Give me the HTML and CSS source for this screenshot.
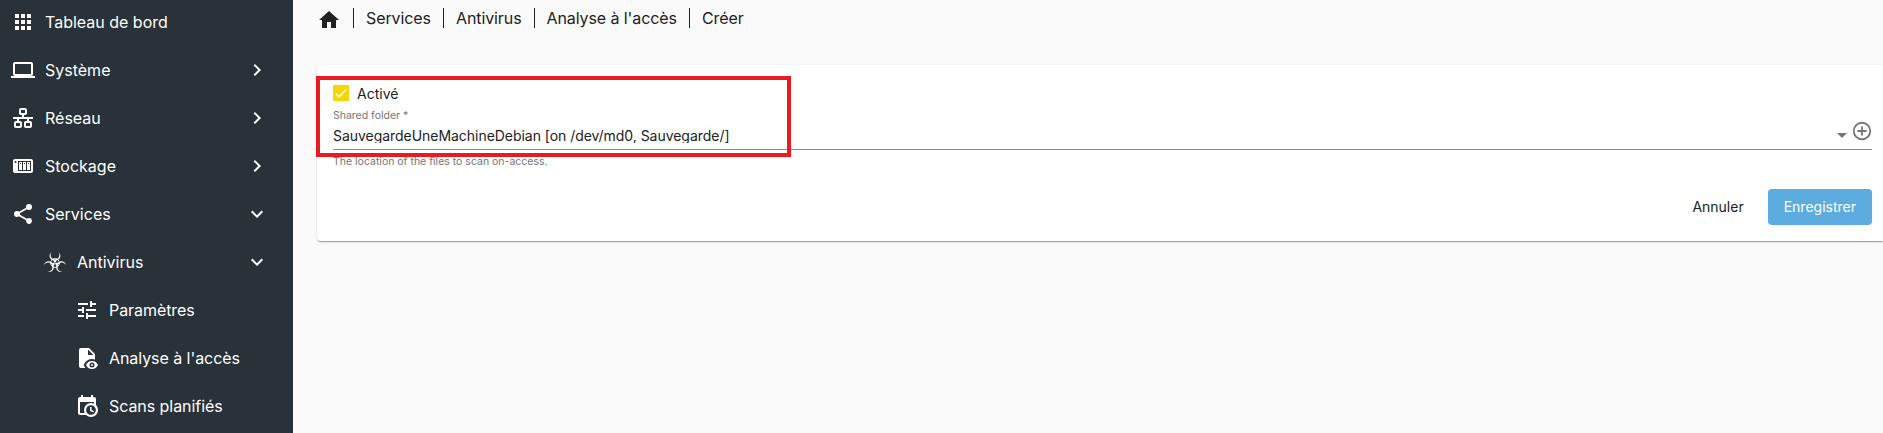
FILE: index.html
```html
<!DOCTYPE html>
<html lang="fr">
<head>
<meta charset="utf-8">
<title>Analyse à l'accès</title>
<link rel="stylesheet" href="styles.css">
</head>
<body>
<nav class="sidebar">
  <a class="item"><svg class="icon" viewBox="0 0 24 24"><path d="M16 20h4v-4h-4m0-2h4v-4h-4m-6-2h4V4h-4m6 4h4V4h-4m-6 10h4v-4h-4m-6 4h4v-4H4m0 10h4v-4H4m6 4h4v-4h-4M4 8h4V4H4v4z"/></svg><span class="label">Tableau de bord</span></a>
  <a class="item"><svg class="icon" viewBox="0 0 24 24"><path d="M4 6h16v10H4m16 2a2 2 0 0 0 2-2V6c0-1.11-.9-2-2-2H4c-1.11 0-2 .89-2 2v10a2 2 0 0 0 2 2H0v2h24v-2h-4z"/></svg><span class="label">Système</span><svg class="icon" viewBox="0 0 24 24"><path d="M8.59 16.58 13.17 12 8.59 7.41 10 6l6 6-6 6z"/></svg></a>
  <a class="item"><svg class="icon" viewBox="0 0 24 24"><path d="M10,2C8.89,2 8,2.89 8,4V7C8,8.11 8.89,9 10,9H11V11H2V13H6V15H5C3.89,15 3,15.89 3,17V20C3,21.11 3.89,22 5,22H9C10.11,22 11,21.11 11,20V17C11,15.89 10.11,15 9,15H8V13H16V15H15C13.89,15 13,15.89 13,17V20C13,21.11 13.89,22 15,22H19C20.11,22 21,21.11 21,20V17C21,15.89 20.11,15 19,15H18V13H22V11H13V9H14C15.11,9 16,8.11 16,7V4C16,2.89 15.11,2 14,2H10M10,4H14V7H10V4M5,17H9V20H5V17M15,17H19V20H15V17Z"/></svg><span class="label">Réseau</span><svg class="icon" viewBox="0 0 24 24"><path d="M8.59 16.58 13.17 12 8.59 7.41 10 6l6 6-6 6z"/></svg></a>
  <a class="item"><svg class="icon" viewBox="0 0 24 24"><path fill-rule="evenodd" d="M4,5C2.89,5 2,5.89 2,7V17C2,18.11 2.89,19 4,19H20C21.11,19 22,18.11 22,17V7C22,5.89 21.11,5 20,5H4M4.5,7A1,1 0 0,1 5.5,8A1,1 0 0,1 4.5,9A1,1 0 0,1 3.5,8A1,1 0 0,1 4.5,7M7,7H20V17H7V7M8,8V16H11V8H8M12,8V16H15V8H12M16,8V16H19V8H16M9,9H10V10H9V9M13,9H14V10H13V9M17,9H18V10H17V9Z"/></svg><span class="label">Stockage</span><svg class="icon" viewBox="0 0 24 24"><path d="M8.59 16.58 13.17 12 8.59 7.41 10 6l6 6-6 6z"/></svg></a>
  <a class="item"><svg class="icon" viewBox="0 0 24 24"><path d="M18,16.08C17.24,16.08 16.56,16.38 16.04,16.85L8.91,12.7C8.96,12.47 9,12.24 9,12C9,11.76 8.96,11.53 8.91,11.3L15.96,7.19C16.5,7.69 17.21,8 18,8A3,3 0 0,0 21,5A3,3 0 0,0 18,2A3,3 0 0,0 15,5C15,5.24 15.04,5.47 15.09,5.7L8.04,9.81C7.5,9.31 6.79,9 6,9A3,3 0 0,0 3,12A3,3 0 0,0 6,15C6.79,15 7.5,14.69 8.04,14.19L15.16,18.34C15.11,18.55 15.08,18.77 15.08,19C15.08,20.61 16.39,21.91 18,21.91C19.61,21.91 20.92,20.61 20.92,19A2.92,2.92 0 0,0 18,16.08Z"/></svg><span class="label">Services</span><svg class="icon" viewBox="0 0 24 24"><path d="M7.41 8.58 12 13.17l4.59-4.59L18 10l-6 6-6-6z"/></svg></a>
  <a class="item level-2"><svg class="icon" viewBox="0 0 24 24">
    <defs><path id="horn" d="M8.3 2.2C5.2 5.4 6.6 9.4 10.4 10.5L11.5 12.6H12.5L13.6 10.5C17.4 9.4 18.8 5.4 15.7 2.2C17.5 5.6 15.8 9 12.5 9.1V9.8H11.5V9.1C8.2 9 6.5 5.6 8.3 2.2Z"/></defs>
    <use href="#horn"/><use href="#horn" transform="rotate(120 12 13)"/><use href="#horn" transform="rotate(240 12 13)"/>
    <circle class="ring" cx="12" cy="13" r="4.4"/></svg><span class="label">Antivirus</span><svg class="icon" viewBox="0 0 24 24"><path d="M7.41 8.58 12 13.17l4.59-4.59L18 10l-6 6-6-6z"/></svg></a>
  <a class="item level-3"><svg class="icon" viewBox="0 0 24 24"><path d="M3 17v2h6v-2H3M3 5v2h10V5H3m10 16v-2h8v-2h-8v-2h-2v6h2M7 9v2H3v2h4v2h2V9H7m14 4v-2H11v2h10m-6-4h2V7h4V5h-4V3h-2v6z"/></svg><span class="label">Paramètres</span></a>
  <a class="item level-3"><svg class="icon" viewBox="0 0 24 24"><path fill-rule="evenodd" d="M17,18a1,1 0 1,1 0,2a1,1 0 1,1 0,-2M17,15C14.27,15 11.94,16.66 11,19C11.94,21.34 14.27,23 17,23C19.73,23 22.06,21.34 23,19C22.06,16.66 19.73,15 17,15M17,21.5A2.5,2.5 0 0,1 14.5,19A2.5,2.5 0 0,1 17,16.5A2.5,2.5 0 0,1 19.5,19A2.5,2.5 0 0,1 17,21.5M9.27,20.37L8.7,19L9.14,18.26C10.43,15.06 13.5,13 17,13C18.05,13 19.06,13.21 20,13.56V8L14,2H6C4.89,2 4,2.89 4,4V20A2,2 0 0,0 6,22H10.5C10,21.5 9.55,20.96 9.27,20.37M13,3.5L18.5,9H13V3.5Z"/></svg><span class="label">Analyse à l'accès</span></a>
  <a class="item level-3"><svg class="icon" viewBox="0 0 24 24"><path fill-rule="evenodd" d="M15,13H16.5V15.82L18.94,17.23L18.19,18.53L15,16.69V13M19,8H5V19H9.67C9.24,18.09 9,17.07 9,16A7,7 0 0,1 16,9C17.07,9 18.09,9.24 19,9.67V8M5,21C3.89,21 3,20.1 3,19V5C3,3.89 3.89,3 5,3H6V1H8V3H16V1H18V3H19A2,2 0 0,1 21,5V11.1C22.24,12.36 23,14.09 23,16A7,7 0 0,1 16,23C14.09,23 12.36,22.24 11.1,21H5M16,11.15A4.85,4.85 0 0,0 11.15,16C11.15,18.68 13.32,20.85 16,20.85A4.85,4.85 0 0,0 20.85,16C20.85,13.32 18.68,11.15 16,11.15Z"/></svg><span class="label">Scans planifiés</span></a>
</nav>
<main class="main">
  <div class="breadcrumb">
    <svg class="home" viewBox="0 0 24 24"><path d="M10,20V14H14V20H19V12H22L12,3L2,12H5V20H10Z"/></svg>
    <span class="crumb">Services</span><span class="crumb">Antivirus</span><span class="crumb">Analyse à l'accès</span><span class="crumb">Créer</span>
  </div>
  <section class="card">
    <div class="check-row">
      <span class="checkbox"><svg viewBox="0 0 24 24"><path d="M4.1,12.7 9,17.6 20.3,6.3"/></svg></span>
      <span>Activé</span>
    </div>
    <div class="field-label">Shared folder *</div>
    <div class="select">
      <span class="value">SauvegardeUneMachineDebian [on /dev/md0, Sauvegarde/]</span>
      <span class="caret"></span>
      <svg class="add" viewBox="0 0 24 24"><path d="M12,20C7.59,20 4,16.41 4,12C4,7.59 7.59,4 12,4C16.41,4 20,7.59 20,12C20,16.41 16.41,20 12,20M12,2A10,10 0 0,0 2,12A10,10 0 0,0 12,22A10,10 0 0,0 22,12A10,10 0 0,0 12,2M13,7H11V11H7V13H11V17H13V13H17V11H13V7Z"/></svg>
    </div>
    <div class="hint">The location of the files to scan on-access.</div>
    <div class="actions"><button class="btn">Annuler</button><button class="btn primary">Enregistrer</button></div>
    <div class="highlight"></div>
  </section>
</main>
</body>
</html>
```
FILE: styles.css
```css
* { box-sizing: border-box; }
body {
  margin: 0;
  height: 433px;
  display: flex;
  overflow: hidden;
  background: #fafafa;
  color: #212121;
  font: 14px/20px Inter, sans-serif;
}
.sidebar {
  width: 293px;
  height: 433px;
  flex: none;
  overflow: hidden;
  background: #283238;
  color: #fff;
  font-size: 16px;
}
.item {
  display: flex;
  align-items: center;
  height: 48px;
  padding: 0 24px 0 11px;
}
.item:first-child { height: 46px; padding-bottom: 2px; }
.level-2 { padding-left: 43px; }
.level-3 { padding-left: 75px; letter-spacing: -0.06px; }
.icon { width: 24px; height: 24px; flex: none; fill: currentColor; }
.label { flex: 1; margin-left: 10px; }
.ring { fill: none; stroke: currentColor; stroke-width: .9; }

.main { flex: 1; min-width: 0; }
.breadcrumb {
  display: flex;
  align-items: center;
  height: 37px;
  padding: 0 0 1px 24px;
  font-size: 16px;
  letter-spacing: -0.09px;
}
.home { width: 24px; height: 24px; margin: 3px 12px 0 0; fill: #212121; }
.crumb { padding: 0 12px; border-left: 1px solid #212121; }
.card {
  position: relative;
  height: 176px;
  margin: 28px 0 0 24px;
  padding: 18px 11px 0 16px;
  border-radius: 4px 0 0 4px;
  background: #fff;
  box-shadow: 0 2px 1px -1px rgba(0,0,0,.2), 0 1px 1px rgba(0,0,0,.14), 0 1px 3px rgba(0,0,0,.12);
}
.check-row { display: flex; align-items: flex-start; gap: 8px; height: 21px; line-height: 22px; }
.checkbox { width: 16px; height: 16px; margin-top: 2px; border-radius: 1px; background: #f9d500; }
.checkbox svg { display: block; width: 16px; height: 16px; fill: none; stroke: #fff; stroke-width: 2.2; }
.field-label { padding-top: 5px; font-size: 10.5px; line-height: 14px; color: #757575; }
.select {
  display: flex;
  align-items: flex-start;
  height: 27px;
  border-bottom: 1px solid #8b8b8b;
}
.value { flex: 1; height: 20px; padding-top: 3px; overflow: hidden; letter-spacing: -0.04px; }
.caret {
  margin: 10px 4px 0 0;
  border: 5px solid transparent;
  border-top-color: #757575;
  border-bottom: 0;
}
.add { width: 22px; height: 22px; margin: -3px -1px 0 0; fill: #757575; }
.hint { padding-top: 5px; font-size: 10.5px; line-height: 14px; color: #757575; }
.actions { display: flex; justify-content: flex-end; gap: 8px; margin-top: 20px; }
.btn {
  height: 36px;
  padding: 0 16px;
  border: 0;
  border-radius: 4px;
  background: none;
  color: #212121;
  font: 14px/36px Inter, sans-serif;
}
.primary { background: #5dacdf; color: #fff; }
.highlight {
  position: absolute;
  left: -1px;
  top: 11px;
  width: 475px;
  height: 81px;
  border: 4px solid #e81c20;
}
```
